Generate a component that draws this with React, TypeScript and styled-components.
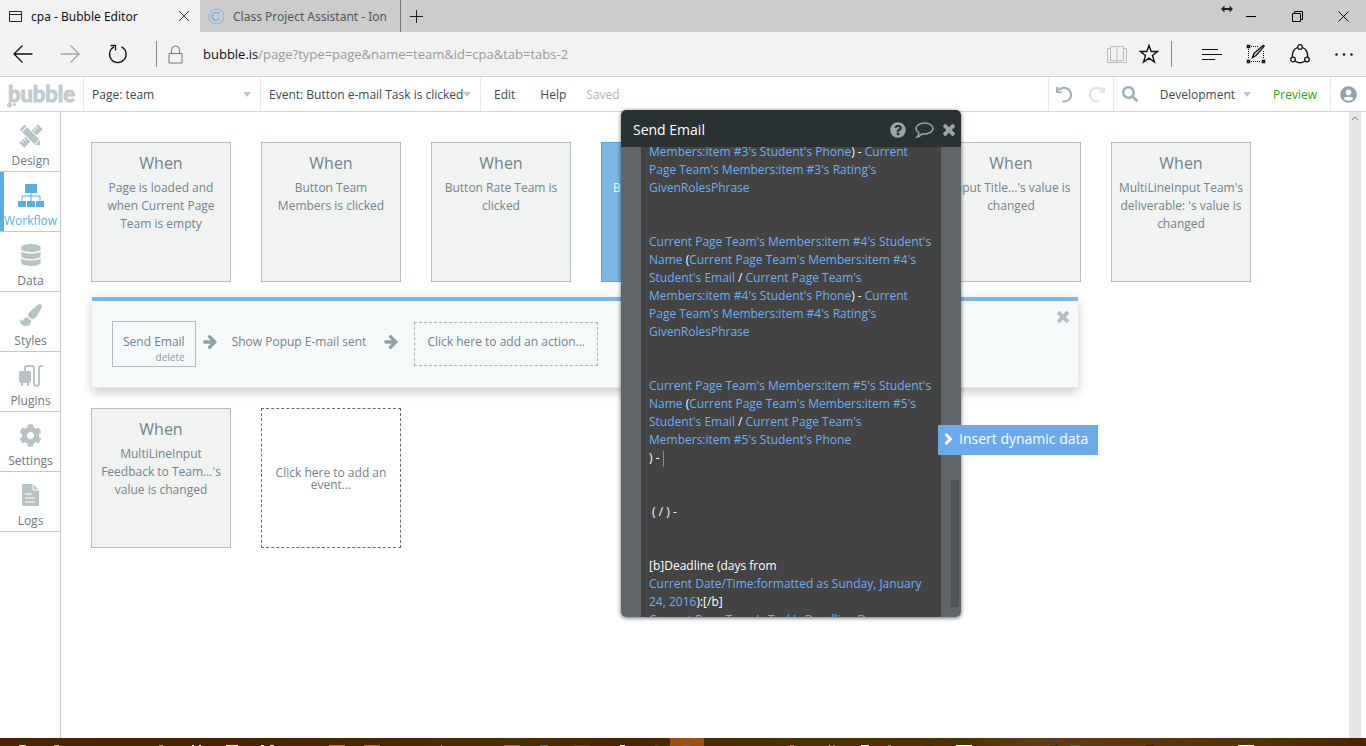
import React from "react";
import styled, { createGlobalStyle } from "styled-components";
import { FaQuestionCircle, FaCog, FaSearch, FaUserCircle, FaPaintBrush, FaDatabase } from "react-icons/fa";

const GlobalStyle = createGlobalStyle`
  * { box-sizing: border-box; }
  body {
    margin: 0;
    background: #fff;
    font-family: "Open Sans", "Noto Sans", sans-serif;
    font-size: 12px;
  }
  button, select, input { font: inherit; color: inherit; }
  button { background: none; border: 0; padding: 0; cursor: pointer; }
  a { text-decoration: none; }
  svg { display: block; flex: none; }
`;

const Page = styled.div`
  position: relative;
  display: flex;
  flex-direction: column;
  min-height: 100vh;
  overflow: hidden;
`;

/* ---------- browser frame ---------- */

const TabStrip = styled.div`
  position: relative;
  display: flex;
  height: 32px;
  background: #ccc;
`;

const Tab = styled.div<{ $active?: boolean }>`
  display: flex;
  align-items: center;
  gap: 8px;
  width: ${(p) => (p.$active ? 200 : 201)}px;
  padding: 0 10px 0 8px;
  background: ${(p) => (p.$active ? "#f2f2f2" : "#ccc")};
  color: ${(p) => (p.$active ? "#111" : "#555")};
  border-right: ${(p) => (p.$active ? "0" : "1px solid #777")};
  white-space: nowrap;
`;

const TabTitle = styled.span`
  flex: 1;
  overflow: hidden;
  font-family: "Noto Sans", sans-serif;
`;

const IconButton = styled.button<{ $width?: number }>`
  display: flex;
  align-items: center;
  justify-content: center;
  flex: none;
  width: ${(p) => (p.$width ? `${p.$width}px` : "auto")};
`;

const WindowControls = styled.div`
  display: flex;
  margin-left: auto;
`;

const ResizeCursor = styled.svg`
  position: absolute;
  top: 5px;
  right: 133px;
`;

const AddressBar = styled.div`
  display: flex;
  align-items: stretch;
  height: 45px;
  background: #f2f2f2;
  border-bottom: 1px solid #ccc;
`;

const NavButtons = styled.div`
  display: flex;
  width: 156px;
  padding-bottom: 1px;
`;

const Divider = styled.span<{ $gap?: boolean }>`
  width: 1px;
  height: 26px;
  margin: 9px ${(p) => (p.$gap ? 18 : 0)}px 0 ${(p) => (p.$gap ? 6 : 0)}px;
  background: #888;
`;

const Url = styled.div`
  display: flex;
  align-items: center;
  flex: 1;
  gap: 20px;
  padding-left: 11px;
  color: #999;
  font-size: 13px;
  b { font-weight: 400; color: #111; }
`;

/* ---------- editor header ---------- */

const Header = styled.header`
  display: flex;
  height: 35px;
  border-bottom: 1px solid #cfdadc;
  color: #3d4a50;
`;

const HeaderCell = styled.div<{ $width: number; $gap?: number; $left?: boolean }>`
  position: relative;
  display: flex;
  align-items: center;
  justify-content: center;
  gap: ${(p) => p.$gap ?? 0}px;
  flex: none;
  width: ${(p) => p.$width}px;
  border-right: ${(p) => (p.$left ? "0" : "1px solid #e2eaec")};
  border-left: ${(p) => (p.$left ? "1px solid #e2eaec" : "0")};
`;

const Logo = styled.a`
  position: relative;
  color: #c0cacf;
  font-family: Lato, sans-serif;
  font-size: 22px;
  font-weight: 700;
  line-height: 32px;
  -webkit-text-stroke: 1px #c0cacf;
`;

const LogoDots = styled.svg`
  position: absolute;
  left: -1px;
  bottom: 2px;
`;

const Picker = styled.select`
  appearance: none;
  width: 100%;
  height: 100%;
  padding: 1px 0 0 8px;
  border: 0;
  background: transparent;
  outline: none;
`;

const Caret = styled.span<{ $over?: boolean }>`
  position: ${(p) => (p.$over ? "absolute" : "static")};
  right: 9px;
  width: 0;
  height: 0;
  border: 4px solid transparent;
  border-top: 5px solid #bcc7cd;
  border-bottom: 0;
`;

const Menu = styled.nav`
  display: flex;
  align-items: center;
  gap: 25px;
  flex: 1;
  padding-left: 13px;
`;

const Saved = styled.span`
  margin-left: -5px;
  color: #b5b5b5;
`;

const VersionTools = styled.div`
  display: flex;
  align-items: center;
  gap: 22px;
  padding-left: 8px;
  border-left: 1px solid #e2eaec;
`;

const VersionButton = styled.button`
  display: flex;
  align-items: center;
  gap: 8px;
`;

const Preview = styled.a`
  display: flex;
  align-items: center;
  padding: 0 13px 0 22px;
  color: #34a203;
`;

/* ---------- editor body ---------- */

const Body = styled.div`
  display: flex;
  flex: 1;
`;

const Sidebar = styled.nav`
  width: 61px;
  flex: none;
  border-right: 1px solid #c6c6c6;
`;

const SideItem = styled.a<{ $active?: boolean }>`
  display: flex;
  flex-direction: column;
  align-items: center;
  justify-content: space-between;
  height: 60px;
  padding: 12px 0 1px 1px;
  border-bottom: 1px solid #c6c6c6;
  box-shadow: ${(p) => (p.$active ? "inset 4px 0 #57aee0" : "none")};
  color: ${(p) => (p.$active ? "#57aee0" : "#6c7a80")};
  line-height: 18px;
  svg { color: ${(p) => (p.$active ? "#57aee0" : "#b7c2c5")}; }
`;

const Workspace = styled.main`
  display: grid;
  grid-template-columns: repeat(auto-fill, 140px);
  align-content: start;
  gap: 15px 30px;
  flex: 1;
  padding: 30px;
`;

const EventCard = styled.button<{ $selected?: boolean }>`
  display: flex;
  flex-direction: column;
  align-items: center;
  height: 140px;
  padding-top: 9px;
  border: 1px solid ${(p) => (p.$selected ? "#4fabe0" : "#b0bcbf")};
  background: ${(p) => (p.$selected ? "#7cb8e5" : "#f0f3f2")};
  color: ${(p) => (p.$selected ? "#fff" : "#73828a")};
  line-height: 18px;
  white-space: pre;
`;

const CardTitle = styled.span`
  margin-bottom: 4px;
  font-size: 16px;
  line-height: 23px;
`;

const AddEvent = styled.button`
  height: 140px;
  padding-top: 2px;
  border: 1px dashed #6b6b6b;
  color: #73828a;
  line-height: 12px;
  white-space: pre;
`;

const ActionPanel = styled.section`
  grid-column: 1 / -1;
  display: flex;
  align-items: center;
  height: 91px;
  margin: 0 173px 5px 1px;
  padding: 0 9px 0 20px;
  border-top: 4px solid #7ab7e4;
  border-bottom: 1px solid #dfe6e6;
  background: #f5f9fa;
  box-shadow: 0 4px 10px rgba(0, 0, 0, 0.22);
  color: #73828a;
`;

const Step = styled.div<{ $selected?: boolean }>`
  display: flex;
  flex-direction: column;
  align-items: flex-end;
  height: 46px;
  padding: 11px 10px 0;
  border: 1px solid ${(p) => (p.$selected ? "#b0bcbf" : "transparent")};
  line-height: 18px;
`;

const DeleteButton = styled.button`
  color: #8d999f;
  font-size: 10px;
  line-height: 12px;
`;

const AddAction = styled.button`
  height: 44px;
  margin-left: 12px;
  padding: 0 12px 5px;
  border: 1px dashed #a9b5b9;
`;

const StepArrow = styled.svg`
  margin: 0 4px 4px 7px;
`;

const PanelClose = styled.button`
  align-self: flex-start;
  margin: 10px 0 0 auto;
  color: #b3bfc2;
`;

const Scrollbar = styled.div`
  display: flex;
  justify-content: center;
  flex: none;
  width: 12px;
  margin-right: 5px;
  padding-top: 4px;
  background: #e6e6e6;
`;

/* ---------- property editor ---------- */

const Popup = styled.section`
  position: absolute;
  top: 110px;
  left: 621px;
  width: 340px;
  border-radius: 5px;
  box-shadow: 0 1px 4px rgba(0, 0, 0, 0.6);
`;

const PopupHeader = styled.header`
  display: flex;
  align-items: center;
  gap: 9px;
  height: 37px;
  padding: 2px 6px 0 12px;
  border-radius: 5px 5px 0 0;
  background: #293133;
  color: #9da5a8;
`;

const PopupTitle = styled.h2`
  flex: 1;
  margin: 0;
  color: #fff;
  font-size: 14px;
  font-weight: 400;
  line-height: 20px;
`;

const PopupBody = styled.div`
  position: relative;
  height: 470px;
  padding: 0 20px;
  overflow: hidden;
  border-radius: 0 0 5px 5px;
  background: #5f6569;
`;

const Message = styled.div`
  height: 100%;
  padding: 0 8px;
  overflow: hidden;
  background: #434343;
  color: #fff;
`;

const Lines = styled.div`
  margin-top: -4px;
`;

const Line = styled.div`
  height: 18px;
  line-height: 18px;
  white-space: pre;
`;

const Expr = styled.span`
  color: #69b1fb;
`;

const TextCaret = styled.span`
  display: inline-block;
  width: 1px;
  height: 16px;
  background: #8a8a8a;
  vertical-align: middle;
`;

const PopupThumb = styled.span`
  position: absolute;
  right: 2px;
  bottom: 10px;
  width: 8px;
  height: 127px;
  background: #50555a;
`;

const InsertData = styled.button`
  position: absolute;
  top: 315px;
  left: 317px;
  display: flex;
  align-items: center;
  gap: 6px;
  width: 160px;
  height: 30px;
  padding: 0 0 3px 6px;
  background: #6aa9ea;
  color: #fff;
  font-size: 14px;
  white-space: nowrap;
`;

/* ---------- desktop task bar ---------- */

const Taskbar = styled.footer`
  display: flex;
  height: 8px;
  overflow: hidden;
  background: linear-gradient(90deg, #4a2500, #472300 15%, #472a00 30%, #4a3000 38%, #472500 45%, #4a3300 60%, #4e2f00 64%, #4d3004 70%, #5f3c1a 76%, #5c3515 83%, #523208 92%, #482500);
`;

const TimesIcon = ({ size }: { size: number }) => (
  <svg width={size} height={size} viewBox="302 366 1188 1188" fill="currentColor">
    <path d="M1490 1322q0 40-28 68l-136 136q-28 28-68 28t-68-28l-294-294-294 294q-28 28-68 28t-68-28l-136-136q-28-28-28-68t28-68l294-294-294-294q-28-28-28-68t28-68l136-136q28-28 68-28t68 28l294 294 294-294q28-28 68-28t68 28l136 136q28 28 28 68t-28 68l-294 294 294 294q28 28 28 68z" />
  </svg>
);

const ArrowIcon = () => (
  <StepArrow width="14" height="14" viewBox="0 192 1472 1547" fill="#8fa0a7">
    <path d="M1472 960q0 54-37 91l-651 651q-39 37-91 37-51 0-90-37l-75-75q-38-38-38-91t38-91l293-293h-704q-52 0-84.5-37.5t-32.5-90.5v-128q0-53 32.5-90.5t84.5-37.5h704l-293-294q-38-36-38-90t38-90l75-75q38-38 90-38 53 0 91 38l651 651q37 35 37 90z" />
  </StepArrow>
);

const UndoIcon = ({ color, flip }: { color: string; flip?: boolean }) => (
  <svg width="17" height="17" viewBox="0 0 17 17" fill="none" stroke={color}>
    <g transform={flip ? "translate(17 0) scale(-1 1)" : undefined}>
      <path d="M3 4A7 6.800 0 1 1 6.500 15.300" strokeWidth="2" />
      <path d="M0 1v6h6V5.500H2.500V1z" fill={color} stroke="none" />
    </g>
  </svg>
);

const DesignIcon = () => (
  <svg width="24" height="24" viewBox="0 0 24 24" fill="currentColor">
    <g transform="rotate(-45 12 12)">
      <path d="M-1 8.500h26v7H-1z" />
      <path d="M2 8.500v3M5 8.500v3M19 8.500v3M22 8.500v3" stroke="#fff" />
    </g>
    <g transform="rotate(45 12 12)">
      <path d="M-1 8h22l5 4-5 4H-1z" stroke="#fff" />
      <path d="M2.500 8v8M20.500 8v8" stroke="#fff" />
    </g>
  </svg>
);

const WorkflowIcon = () => (
  <svg width="28" height="24" viewBox="0 0 28 24" fill="currentColor">
    <path d="M8 0h12v9H8zM1 17h8v6H1zM10 17h8v6h-8zM19 17h8v6h-8z" />
    <path d="M14 9v8M5 17v-5h18v5" fill="none" stroke="currentColor" />
  </svg>
);

const PluginIcon = () => (
  <svg width="26" height="24" viewBox="0 0 26 24" fill="none" stroke="currentColor" strokeWidth="2">
    <path d="M1 8q0-1 1-1h10q1 0 1 1v9q0 2-2 2H3q-2 0-2-2z" fill="currentColor" stroke="none" />
    <path d="M4 18v4M10 18v4" />
    <path d="M7 8V4q0-2 2-2h5q2 0 2 2v15q0 3 2.500 3t2.500-3V4q0-2 2-2h2" />
  </svg>
);

const LogIcon = () => (
  <svg width="18" height="22" viewBox="0 0 18 22" fill="currentColor">
    <path d="M0 1q0-1 1-1h10l6 6v15q0 1-1 1H1q-1 0-1-1z" />
    <path d="M11 0v6h6M3 10h7M3 14h10M3 18h10" fill="none" stroke="#fff" />
  </svg>
);

const sections: { label: string; icon: React.ReactNode; active?: boolean }[] = [
  { label: "Design", icon: <DesignIcon /> },
  { label: "Workflow", icon: <WorkflowIcon />, active: true },
  { label: "Data", icon: <FaDatabase size={22} /> },
  { label: "Styles", icon: <FaPaintBrush size={22} /> },
  { label: "Plugins", icon: <PluginIcon /> },
  { label: "Settings", icon: <FaCog size={23} /> },
  { label: "Logs", icon: <LogIcon /> },
];

const topEvents = [
  "Page is loaded and\nwhen Current Page\nTeam is empty",
  "Button Team\nMembers is clicked",
  "Button Rate Team is\nclicked",
  "Button e-mail Task is\nclicked",
  "",
  "Input Title...'s value is\nchanged",
  "MultiLineInput Team's\ndeliverable: 's value is\nchanged",
];

/* Text in braces is a dynamic expression, the rest is typed text. */
const messageLines = [
  "{Members:item #3's Student's Phone}) - {Current}",
  "{Page Team's Members:item #3's Rating's}",
  "{GivenRolesPhrase}",
  "",
  "",
  "{Current Page Team's Members:item #4's Student's}",
  "{Name }({Current Page Team's Members:item #4's}",
  "{Student's Email} / {Current Page Team's}",
  "{Members:item #4's Student's Phone}) - {Current}",
  "{Page Team's Members:item #4's Rating's}",
  "{GivenRolesPhrase}",
  "",
  "",
  "{Current Page Team's Members:item #5's Student's}",
  "{Name }({Current Page Team's Members:item #5's}",
  "{Student's Email} / {Current Page Team's}",
  "{Members:item #5's Student's Phone}",
  ") - |",
  "",
  "",
  " ( / ) -",
  "",
  "",
  "[b]Deadline (days from",
  "{Current Date/Time:formatted as Sunday, January}",
  "{24, 2016}):[/b]",
  "{Current Page Team's Task's Deadline Days}",
];

const renderLine = (line: string) =>
  line
    .split(/(\{[^}]*\}|\|)/)
    .filter(Boolean)
    .map((part, i) => {
      if (part === "|") return <TextCaret key={i} />;
      if (part.startsWith("{")) return <Expr key={i}>{part.slice(1, -1)}</Expr>;
      return part;
    });

/* Tops of the task bar icons: x, width, colour. */
const taskIcons: [number, number, string][] = [
  [19, 7, "#ddd"], [54, 5, "#ccc"], [159, 4, "#aaa"], [192, 2, "#fff"], [199, 2, "#fff"],
  [226, 12, "#fff"], [261, 3, "#eee"], [270, 4, "#eee"], [329, 16, "#c8702e"], [364, 16, "#c8702e"],
  [441, 1, "#9ab"], [504, 16, "#d9472b"], [540, 8, "#0a84e0"], [574, 16, "#5b2a86"], [620, 5, "#fff"],
  [655, 3, "#5b2a86"], [683, 7, "#1a7ad0"], [790, 4, "#e07820"], [829, 1, "#fff"], [833, 2, "#998"],
  [861, 8, "#fff"], [888, 3, "#1ab0c8"], [926, 8, "#234"], [956, 16, "#fff"], [1050, 8, "#234"],
  [1070, 10, "#1464ff"], [1146, 8, "#322"], [1238, 16, "#fff"],
];

export default function App() {
  return (
    <Page>
      <GlobalStyle />
      <TabStrip>
        <Tab $active>
          <svg width="15" height="13" viewBox="0 0 15 13" fill="none" stroke="#222">
            <path d="M1.500 1.500h12v10h-12zM1.500 4.500h12" />
          </svg>
          <TabTitle>cpa - Bubble Editor</TabTitle>
          <IconButton aria-label="Close tab">
            <svg width="12" height="12" viewBox="0 0 12 12" stroke="#333"><path d="M1 1l10 10M11 1L1 11" /></svg>
          </IconButton>
        </Tab>
        <Tab>
          <svg width="17" height="17" viewBox="0 0 17 17" fill="none" stroke="#78b4ec">
            <circle cx="8.500" cy="8.500" r="7.500" />
            <path d="M11.500 6.200a4 4 0 1 0 0 4.600" strokeWidth="1.500" />
          </svg>
          <TabTitle>Class Project Assistant - Ion</TabTitle>
        </Tab>
        <IconButton $width={31} aria-label="New tab">
          <svg width="13" height="13" viewBox="0 0 13 13" stroke="#222"><path d="M6.500 0v13M0 6.500h13" /></svg>
        </IconButton>
        <WindowControls>
          <IconButton $width={46} aria-label="Minimize">
            <svg width="11" height="11" viewBox="0 0 11 11" stroke="#000"><path d="M0 5.500h10" /></svg>
          </IconButton>
          <IconButton $width={46} aria-label="Restore">
            <svg width="11" height="11" viewBox="0 0 11 11" fill="none" stroke="#000"><path d="M.5 2.500h8v8h-8zM2.500 2.500v-2h8v8h-2" /></svg>
          </IconButton>
          <IconButton $width={46} aria-label="Close">
            <svg width="11" height="11" viewBox="0 0 11 11" stroke="#000"><path d="M.5.5l10 10M10.500.5l-10 10" /></svg>
          </IconButton>
        </WindowControls>
        <ResizeCursor width="12" height="8" viewBox="0 0 12 8" fill="#222">
          <path d="M0 4l3.500-3.500V3h5V.5L12 4 8.500 7.500V5h-5v2.500z" />
        </ResizeCursor>
      </TabStrip>

      <AddressBar>
        <NavButtons>
          <IconButton $width={46} aria-label="Back">
            <svg width="20" height="18" viewBox="0 0 20 18" fill="none" stroke="#111" strokeWidth="1.300"><path d="M19.500 9H1M9.500.5L1 9l8.500 8.500" /></svg>
          </IconButton>
          <IconButton $width={48} aria-label="Forward">
            <svg width="20" height="18" viewBox="0 0 20 18" fill="none" stroke="#a5a5a5" strokeWidth="1.300"><path d="M.5 9H19M10.500.5L19 9l-8.500 8.500" /></svg>
          </IconButton>
          <IconButton $width={48} aria-label="Refresh">
            <svg width="20" height="20" viewBox="0 0 20 20" fill="none" stroke="#111" strokeWidth="1.300">
              <path d="M13.500 2.800A8.300 8.300 0 1 1 6 2.900" />
              <path d="M2.500 1.500h5v5" />
            </svg>
          </IconButton>
        </NavButtons>
        <Divider />
        <Url>
          <svg width="15" height="19" viewBox="0 0 15 19" fill="none" stroke="#777"><path d="M1 8.500h13v9.500H1zM3.500 8.500V5q0-4 4-4t4 4v3.500" /></svg>
          <span><b>bubble.is</b>/page?type=page&amp;name=team&amp;id=cpa&amp;tab=tabs-2</span>
        </Url>
        <IconButton $width={32} aria-label="Reading view">
          <svg width="20" height="19" viewBox="0 0 20 19" fill="none" stroke="#bbb"><path d="M3.500 1.500h5q1.500 0 1.500 1 0-1 1.500-1h5v14h-5q-1.500 0-1.500 1 0-1-1.500-1h-5zM10 2v15M3 3.500H.5v14h19v-14H17" /></svg>
        </IconButton>
        <IconButton $width={32} aria-label="Favorites">
          <svg width="20" height="20" viewBox="0 0 20 20" fill="none" stroke="#111" strokeWidth="1.400"><path d="M10 1.500l2.200 6h6.300l-5 4 1.900 6.500L10 14.200 4.600 18l1.900-6.500-5-4h6.300z" /></svg>
        </IconButton>
        <Divider $gap />
        <IconButton $width={44} aria-label="Hub">
          <svg width="20" height="13" viewBox="0 0 20 13" stroke="#111"><path d="M0 1.500h16M0 6.500h20M0 11.500h13" /></svg>
        </IconButton>
        <IconButton $width={44} aria-label="Make a web note">
          <svg width="20" height="20" viewBox="0 0 20 20" fill="none" stroke="#111">
            <path d="M5 2.500h8M2.500 5v10M17.500 7v8M5 17.500h10" strokeDasharray="1 1" />
            <path d="M1.500 1.500h2v2h-2zM1.500 16.500h2v2h-2zM16.500 16.500h2v2h-2z" strokeWidth="1.500" />
            <path d="M6.500 13.500l1.500-4 9-8q1.500-.5 1 1l-8 9z" strokeWidth="1.300" />
          </svg>
        </IconButton>
        <IconButton $width={44} aria-label="Share">
          <svg width="20" height="20" viewBox="0 0 20 20" fill="none" stroke="#111" strokeWidth="1.300">
            <circle cx="10" cy="3" r="2.300" /><circle cx="3" cy="15.500" r="2.300" /><circle cx="17" cy="15.500" r="2.300" />
            <path d="M7.500 3.500Q2 6 2.300 13M12.500 3.500Q18 6 17.700 13M5 17q5 3.500 10 0" />
          </svg>
        </IconButton>
        <IconButton $width={44} aria-label="More">
          <svg width="18" height="3" viewBox="0 0 18 3" fill="#111"><circle cx="1.500" cy="1.500" r="1.200" /><circle cx="9" cy="1.500" r="1.200" /><circle cx="16.500" cy="1.500" r="1.200" /></svg>
        </IconButton>
      </AddressBar>

      <Header>
        <HeaderCell $width={84}>
          <Logo href="#home">
            bubble
            <LogoDots width="12" height="10" viewBox="0 0 12 10" fill="#c0cacf">
              <circle cx="2.500" cy="7" r="2.500" /><circle cx="7.500" cy="6.500" r="1.500" />
            </LogoDots>
          </Logo>
        </HeaderCell>
        <HeaderCell $width={177}>
          <Picker aria-label="Page"><option>Page: team</option></Picker>
          <Caret $over />
        </HeaderCell>
        <HeaderCell $width={220}>
          <Picker aria-label="Event"><option>Event: Button e-mail Task is clicked</option></Picker>
          <Caret $over />
        </HeaderCell>
        <Menu>
          <button>Edit</button>
          <button>Help</button>
          <Saved>Saved</Saved>
        </Menu>
        <HeaderCell $width={65} $gap={15} $left>
          <IconButton aria-label="Undo"><UndoIcon color="#9fb0b7" /></IconButton>
          <IconButton aria-label="Redo"><UndoIcon color="#dfe3e4" flip /></IconButton>
        </HeaderCell>
        <VersionTools>
          <IconButton $width={16} aria-label="Search"><FaSearch size={16} color="#9fb0b7" /></IconButton>
          <VersionButton>Development<Caret /></VersionButton>
        </VersionTools>
        <Preview href="#preview">Preview</Preview>
        <HeaderCell $width={36} $left>
          <IconButton aria-label="Account"><FaUserCircle size={17} color="#8fa3ab" /></IconButton>
        </HeaderCell>
      </Header>

      <Body>
        <Sidebar>
          {sections.map((s) => (
            <SideItem key={s.label} href={`#${s.label.toLowerCase()}`} $active={s.active}>
              {s.icon}
              {s.label}
            </SideItem>
          ))}
        </Sidebar>

        <Workspace>
          {topEvents.map((text, i) => (
            <EventCard key={i} $selected={i === 3}>
              <CardTitle>When</CardTitle>
              {text}
            </EventCard>
          ))}

          <ActionPanel>
            <Step $selected>
              Send Email
              <DeleteButton>delete</DeleteButton>
            </Step>
            <ArrowIcon />
            <Step>Show Popup E-mail sent</Step>
            <ArrowIcon />
            <AddAction>Click here to add an action...</AddAction>
            <PanelClose aria-label="Close actions"><TimesIcon size={12} /></PanelClose>
          </ActionPanel>

          <EventCard>
            <CardTitle>When</CardTitle>
            {"MultiLineInput\nFeedback to Team...'s\nvalue is changed"}
          </EventCard>
          <AddEvent>{"Click here to add an\nevent..."}</AddEvent>
        </Workspace>

        <Scrollbar>
          <svg width="8" height="5" viewBox="0 0 8 5" fill="none" stroke="#777"><path d="M1 4l3-3 3 3" /></svg>
        </Scrollbar>
      </Body>

      <Taskbar>
        <svg width="1366" height="8" viewBox="0 0 1366 8">
          <rect x="670" width="34" height="8" fill="#955117" />
          {taskIcons.map(([x, w, fill]) => (
            <rect key={x} x={x} y="7" width={w} height="1" fill={fill} />
          ))}
        </svg>
      </Taskbar>

      <Popup>
        <PopupHeader>
          <PopupTitle>Send Email</PopupTitle>
          <IconButton aria-label="Help"><FaQuestionCircle size={16} /></IconButton>
          <IconButton aria-label="Comment">
            <svg width="19" height="16" viewBox="0 0 19 16" fill="none" stroke="currentColor" strokeWidth="1.500">
              <path d="M9.500 1C14 1 18 3.300 18 6.500S14 12 9.500 12q-1.200 0-2.300-.2Q5 14.500 2 15q1.800-1.500 1.800-4.300Q1 9 1 6.500C1 3.300 5 1 9.500 1z" />
            </svg>
          </IconButton>
          <IconButton aria-label="Close"><TimesIcon size={12} /></IconButton>
        </PopupHeader>
        <PopupBody>
          <Message role="textbox" aria-label="Message" aria-multiline="true">
            <Lines>
              {messageLines.map((line, i) => (
                <Line key={i}>{renderLine(line)}</Line>
              ))}
            </Lines>
          </Message>
          <PopupThumb />
        </PopupBody>
        <InsertData>
          <svg width="9" height="12" viewBox="0 0 9 12" fill="none" stroke="#fff" strokeWidth="3"><path d="M1.500 1L6.500 6l-5 5" /></svg>
          Insert dynamic data
        </InsertData>
      </Popup>
    </Page>
  );
}
